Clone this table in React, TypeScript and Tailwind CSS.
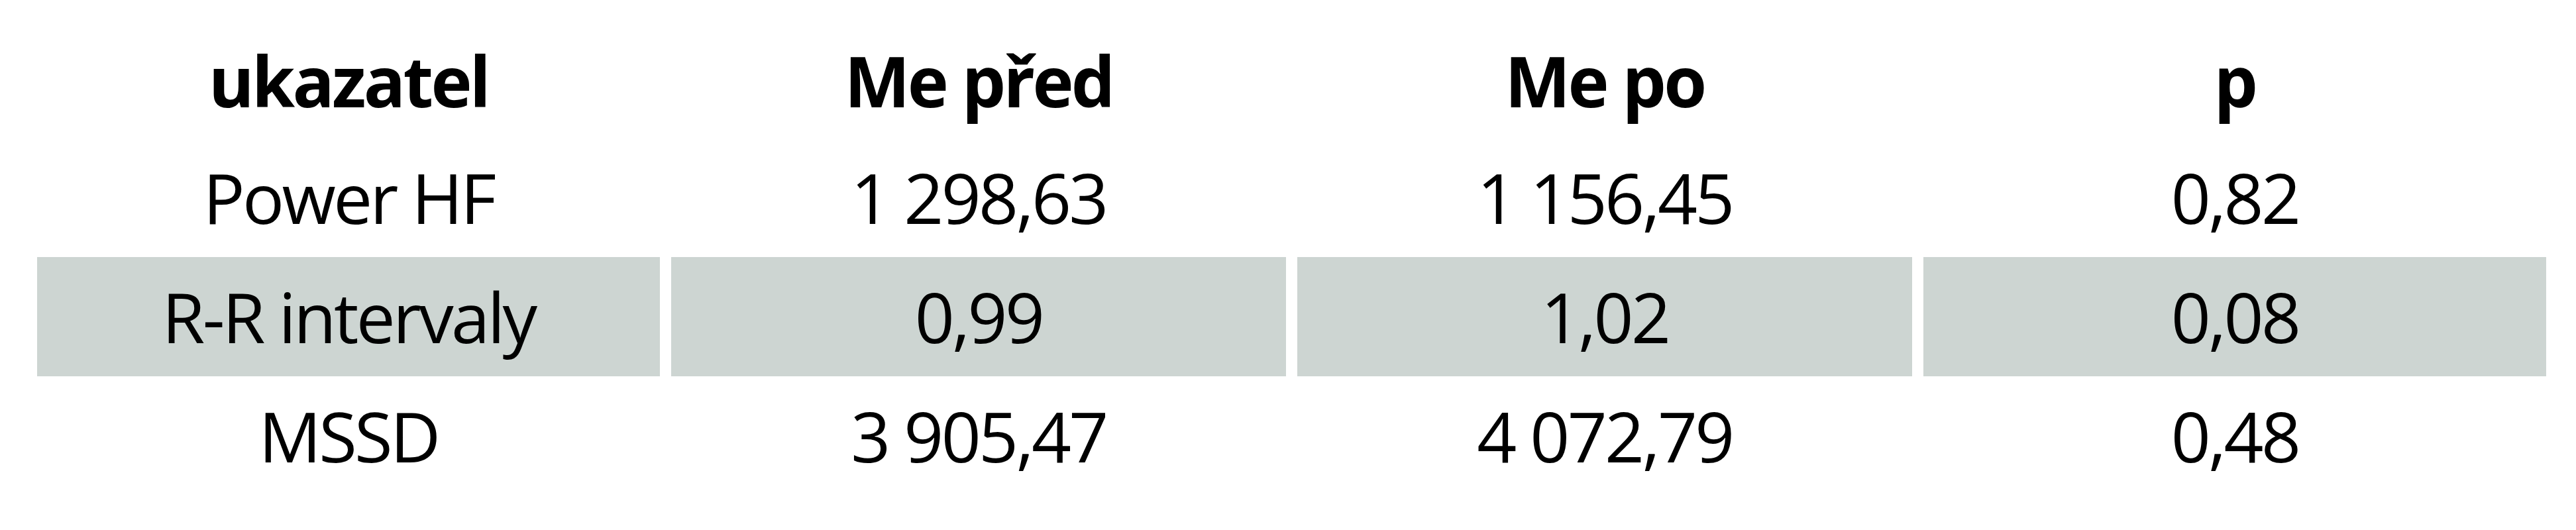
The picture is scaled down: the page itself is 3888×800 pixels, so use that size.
import React from "react";

const header = ["ukazatel", "Me před", "Me po", "p"];
const rows = [
  ["Power HF", "1 298,63", "1 156,45", "0,82"],
  ["R-R intervaly", "0,99", "1,02", "0,08"],
  ["MSSD", "3 905,47", "4 072,79", "0,48"],
];

export default function App() {
  return (
    <div
      className="w-[3888px] h-[800px] bg-white pl-[56px] pt-[36px] text-black"
      style={{ fontFamily: '"Open Sans", "Noto Sans", sans-serif' }}
    >
      <div className="grid grid-cols-[940px_928px_928px_940px] gap-x-[17px] text-[105px] tracking-[-0.035em] font-stretch-90%">
        {header.map((h) => (
          <div
            key={h}
            className="h-[172px] leading-[172px] text-center font-bold whitespace-nowrap"
          >
            {h}
          </div>
        ))}
        {rows.map((r, i) =>
          r.map((c, j) => (
            <div
              key={`${i}-${j}`}
              className={
                i === 1
                  ? "h-[180px] leading-[180px] text-center whitespace-nowrap bg-[#cdd5d2]"
                  : "h-[180px] leading-[180px] text-center whitespace-nowrap"
              }
            >
              {c}
            </div>
          ))
        )}
      </div>
    </div>
  );
}
